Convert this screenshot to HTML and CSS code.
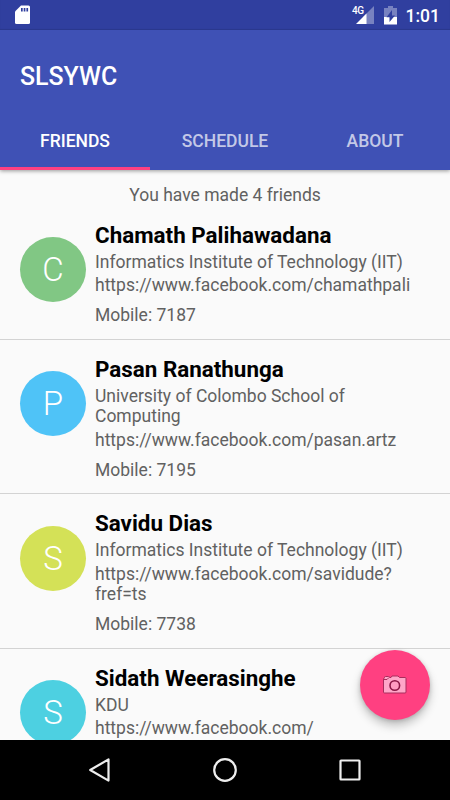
FILE: index.html
```html
<!DOCTYPE html>
<html lang="en">
<head>
<meta charset="utf-8">
<title>SLSYWC</title>
<link rel="stylesheet" href="styles.css">
</head>
<body>
<div class="screen">
  <header class="appbar">
    <div class="status">
      <svg class="sd" width="16" height="20" viewBox="0 0 16 20"><path fill="#fff" d="M6 .5H13.500Q15 .5 15 2V17.500Q15 19 13.500 19H1.500Q0 19 0 17.500V6.500Z"/><path fill="#303f9f" d="M6 3h1.700v3.500H6zM8.700 3h1.700v3.500H8.700zM11.400 3h1.700v3.500h-1.700z"/></svg>
      <div class="indicators">
        <span class="network">4G</span>
        <svg class="signal" width="18" height="18" viewBox="0 0 18 18"><path fill="#fff" opacity=".35" d="M18 0V18H9L7 11Z"/><path fill="#fff" d="M10.500 7.500V18H0Z"/></svg>
        <svg class="battery" width="14" height="19" viewBox="0 0 14 19"><path fill="#fff" opacity=".35" d="M4 0h5v2h4v9H0V2h4z"/><path fill="#fff" d="M0 11h13v7.500H0z"/><path fill="#303f9f" d="M8 4v5.500h3L5.500 16v-4.800h-3z"/></svg>
        <span class="clock">1:01</span>
      </div>
    </div>
    <h1 class="title">SLSYWC</h1>
    <nav class="tabs">
      <div class="tab active">FRIENDS</div>
      <div class="tab">SCHEDULE</div>
      <div class="tab">ABOUT</div>
    </nav>
  </header>
  <main class="content">
    <p class="summary">You have made 4 friends</p>
    <article class="friend">
      <div class="avatar green">C</div>
      <div class="details">
        <h2>Chamath Palihawadana</h2>
        <p>Informatics Institute of Technology (IIT)</p>
        <p>https://www.facebook.com/chamathpali</p>
        <p class="mobile">Mobile: 7187</p>
      </div>
    </article>
    <article class="friend">
      <div class="avatar blue">P</div>
      <div class="details">
        <h2>Pasan Ranathunga</h2>
        <p>University of Colombo School of<br>Computing</p>
        <p>https://www.facebook.com/pasan.artz</p>
        <p class="mobile">Mobile: 7195</p>
      </div>
    </article>
    <article class="friend">
      <div class="avatar lime">S</div>
      <div class="details">
        <h2>Savidu Dias</h2>
        <p>Informatics Institute of Technology (IIT)</p>
        <p>https://www.facebook.com/savidude?<br>fref=ts</p>
        <p class="mobile">Mobile: 7738</p>
      </div>
    </article>
    <article class="friend">
      <div class="avatar cyan">S</div>
      <div class="details">
        <h2>Sidath Weerasinghe</h2>
        <p>KDU</p>
        <p>https://www.facebook.com/</p>
      </div>
    </article>
    <div class="fab">
      <svg width="24" height="20" viewBox="0 0 24 20"><path fill="#ffa6c8" stroke="#a92c5c" stroke-width="1" d="M1.500 2.500Q1.500 1.500 2.500 1.500H5.500L7 2.500H8L9 1H15L16.500 2.500H22Q23 2.500 23 3.500V17Q23 18 22 18H1.500Q.5 18 .5 17V4Z"/><path fill="none" stroke="#a92c5c" d="M1 4.500H4L6 2.500"/><circle cx="11.800" cy="10.500" r="4.800" fill="#ff9cc1" stroke="#8b1745" stroke-width="1.600"/></svg>
    </div>
  </main>
  <footer class="navbar">
    <svg width="24" height="26" viewBox="0 0 24 26"><path d="M20.500 2.400V23.600L2.200 13Z"/></svg>
    <svg width="24" height="26" viewBox="0 0 24 26"><circle cx="12" cy="13" r="10.800"/></svg>
    <svg width="24" height="26" viewBox="0 0 24 26"><rect x="2.500" y="3.500" width="19" height="19" rx=".5"/></svg>
  </footer>
</div>
</body>
</html>
```
FILE: styles.css
```css
* { box-sizing: border-box; margin: 0; padding: 0; }
body { font-family: Roboto, sans-serif; background: #fafafa; }
.screen { width: 450px; height: 800px; display: flex; flex-direction: column; overflow: hidden; }
.appbar { height: 170px; flex: none; background: #3f51b5; color: #fff; position: relative; z-index: 1; box-shadow: 0 1px 4px rgba(0,0,0,.4); display: flex; flex-direction: column; }
.status { height: 30px; background: #303f9f; display: flex; justify-content: space-between; padding: 5px 10px 0 15px; box-shadow: inset 0 -1px 1px rgba(0,0,0,.12); }
.indicators { display: flex; align-items: flex-start; }
.network { font-size: 10px; font-weight: 500; line-height: 12px; letter-spacing: -.5px; margin-right: -8px; }
.signal { margin-top: 1px; margin-right: 10px; }
.battery { margin-top: 1px; margin-right: 8px; }
.clock { font-size: 17.5px; font-weight: 500; line-height: 22px; }
.title { height: 80px; padding: 27px 20px 0; font-size: 24.9px; line-height: 40px; font-weight: 500; }
.tabs { height: 60px; display: grid; grid-template-columns: repeat(3, 1fr); grid-template-rows: 60px; }
.tab { padding-top: 20px; font-size: 17.5px; font-weight: 500; line-height: 23px; text-align: center; color: rgba(255,255,255,.7); }
.tab.active { color: #fff; border-bottom: 3px solid #ff4081; }
.content { flex: 1; min-height: 0; overflow: hidden; position: relative; color: #616161; font-size: 17.5px; line-height: 20.5px; }
.summary { height: 35.5px; padding-top: 15px; text-align: center; }
.friend { display: flex; gap: 9px; padding: 15.5px 20px 12.9px; border-bottom: 1px solid #d3d3d3; }
.avatar { width: 66px; height: 65px; flex: none; margin-top: 16px; border-radius: 50%; color: #fff; font-size: 33px; font-weight: 300; line-height: 66px; text-align: center; }
.green { background: #81c784; }
.blue { background: #4fc3f7; }
.lime { background: #d4e157; }
.cyan { background: #4dd0e1; }
.details { padding-top: .7px; display: flex; flex-direction: column; gap: 3px; white-space: nowrap; }
.details h2 { font-size: 22.4px; line-height: 27px; font-weight: 700; color: #000; }
.details .mobile { margin-top: 6.5px; }
.fab { position: absolute; left: 360px; top: 480px; width: 70px; height: 70px; border-radius: 50%; background: #ff4081; box-shadow: 0 6px 10px rgba(0,0,0,.22), 0 1px 4px rgba(0,0,0,.16); display: flex; align-items: center; justify-content: center; }
.navbar { height: 60px; flex: none; background: #000; display: flex; justify-content: center; align-items: center; gap: 101px; }
.navbar svg { fill: none; stroke: #eee; stroke-width: 2.200; stroke-linejoin: round; }
```
